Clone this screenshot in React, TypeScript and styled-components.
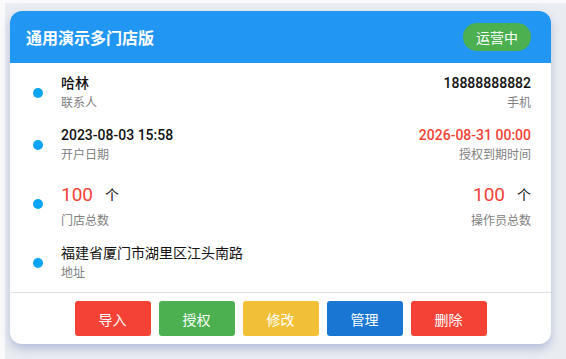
import styled, { createGlobalStyle } from "styled-components";

const GlobalStyle = createGlobalStyle`
  html, body {
    margin: 0;
    padding: 0;
    background: #fafafa;
    font-family: Roboto, "Noto Sans CJK SC", sans-serif;
  }
`;

const Page = styled.div`
  margin: 3px 0 0 5px;
  padding: 8px 15px 15px 5px;
  background: #e9ecf1;
  min-height: 333px;
  box-sizing: border-box;
`;

const Card = styled.div`
  width: 541px;
  background: #fff;
  border-radius: 12px;
  overflow: hidden;
  box-shadow: 0 5px 10px rgba(120, 135, 190, 0.45);
`;

const Header = styled.div`
  display: flex;
  align-items: center;
  justify-content: space-between;
  height: 52px;
  padding: 0 20px 0 16px;
  background: #2196f3;
`;

const Title = styled.div`
  color: #fff;
  font-size: 16px;
  font-weight: 700;
`;

const Badge = styled.div`
  display: flex;
  align-items: center;
  justify-content: center;
  width: 68px;
  height: 28px;
  border-radius: 14px;
  background: #4caf50;
  color: #fff;
  font-size: 14px;
`;

const Body = styled.div`
  display: flex;
  flex-direction: column;
  gap: 12px;
  padding: 10px 20px 9px 23px;
  border-bottom: 1px solid #e0e0e0;
`;

const Row = styled.div`
  display: flex;
  align-items: center;
`;

const Dot = styled.span`
  width: 10px;
  height: 10px;
  border-radius: 50%;
  background: #0aa5f5;
  margin-right: 18px;
  flex-shrink: 0;
`;

const Field = styled.div<{ $right?: boolean }>`
  display: flex;
  flex-direction: column;
  align-items: ${(p) => (p.$right ? "flex-end" : "flex-start")};
  margin-left: ${(p) => (p.$right ? "auto" : "0")};
`;

const Value = styled.div<{ $red?: boolean; $bold?: boolean }>`
  font-size: 14px;
  line-height: 20px;
  color: ${(p) => (p.$red ? "#f44336" : "#111")};
  font-weight: ${(p) => (p.$bold ? 500 : 400)};
`;

const Count = styled.div`
  display: flex;
  align-items: center;
  gap: 12px;
  height: 34px;
`;

const Number = styled.span`
  font-size: 19px;
  color: #f44336;
`;

const Unit = styled.span`
  font-size: 14px;
  color: #111;
`;

const Label = styled.div`
  font-size: 12px;
  line-height: 20px;
  color: #808080;
`;

const Footer = styled.div`
  display: flex;
  justify-content: center;
  gap: 8px;
  padding: 8px 0;
`;

const Button = styled.button<{ $color: string }>`
  width: 76px;
  height: 35px;
  border: none;
  border-radius: 3px;
  background: ${(p) => p.$color};
  color: #fff;
  font-size: 14px;
  font-family: inherit;
`;

const buttons = [
  { text: "导入", color: "#f44336" },
  { text: "授权", color: "#4caf50" },
  { text: "修改", color: "#f2c037" },
  { text: "管理", color: "#1976d2" },
  { text: "删除", color: "#f44336" },
];

export default function App() {
  return (
    <>
      <GlobalStyle />
      <Page>
        <Card>
          <Header>
            <Title>通用演示多门店版</Title>
            <Badge>运营中</Badge>
          </Header>
          <Body>
            <Row>
              <Dot />
              <Field>
                <Value $bold>哈林</Value>
                <Label>联系人</Label>
              </Field>
              <Field $right>
                <Value $bold>18888888882</Value>
                <Label>手机</Label>
              </Field>
            </Row>
            <Row>
              <Dot />
              <Field>
                <Value $bold>2023-08-03 15:58</Value>
                <Label>开户日期</Label>
              </Field>
              <Field $right>
                <Value $red $bold>
                  2026-08-31 00:00
                </Value>
                <Label>授权到期时间</Label>
              </Field>
            </Row>
            <Row>
              <Dot />
              <Field>
                <Count>
                  <Number>100</Number>
                  <Unit>个</Unit>
                </Count>
                <Label>门店总数</Label>
              </Field>
              <Field $right>
                <Count>
                  <Number>100</Number>
                  <Unit>个</Unit>
                </Count>
                <Label>操作员总数</Label>
              </Field>
            </Row>
            <Row>
              <Dot />
              <Field>
                <Value>福建省厦门市湖里区江头南路</Value>
                <Label>地址</Label>
              </Field>
            </Row>
          </Body>
          <Footer>
            {buttons.map((b) => (
              <Button key={b.text} $color={b.color}>
                {b.text}
              </Button>
            ))}
          </Footer>
        </Card>
      </Page>
    </>
  );
}
